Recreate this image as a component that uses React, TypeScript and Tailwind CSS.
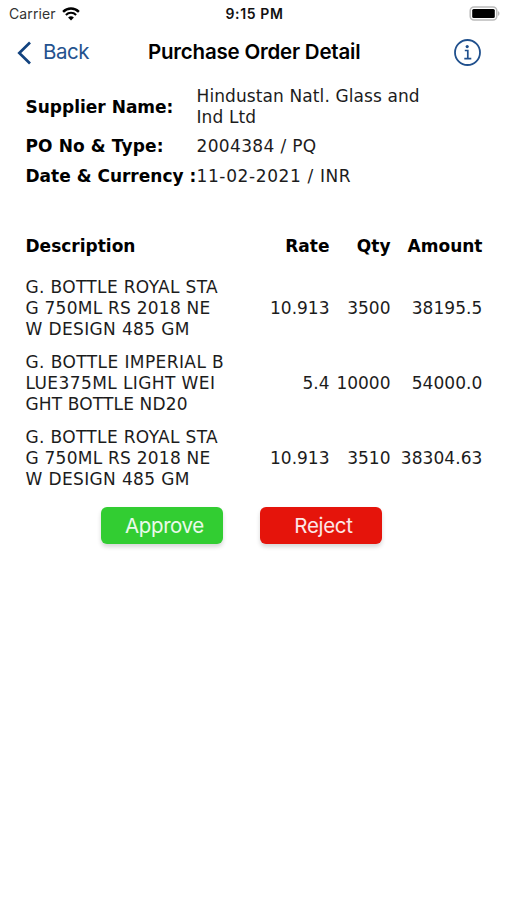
import classNames from "clsx";

interface OrderItem {
  lines: { text: string; tracking: string }[];
  rate: string;
  qty: string;
  amount: string;
}

const royalStag = [
  { text: "G. BOTTLE ROYAL STA", tracking: "tracking-[0.34px]" },
  { text: "G 750ML RS 2018 NE", tracking: "tracking-[0.24px]" },
  { text: "W DESIGN 485 GM", tracking: "tracking-[0.36px]" },
];

const imperialBlue = [
  { text: "G. BOTTLE IMPERIAL B", tracking: "tracking-[0.41px]" },
  { text: "LUE375ML LIGHT WEI", tracking: "tracking-[0.4px]" },
  { text: "GHT BOTTLE ND20", tracking: "tracking-[0.14px]" },
];

const items: OrderItem[] = [
  { lines: royalStag, rate: "10.913", qty: "3500", amount: "38195.5" },
  { lines: imperialBlue, rate: "5.4", qty: "10000", amount: "54000.0" },
  { lines: royalStag, rate: "10.913", qty: "3510", amount: "38304.63" },
];

const StatusBar = () => (
  <div className="grid h-[27px] grid-cols-3 items-center pl-[9px] pr-[7px] text-[14px]">
    <div className="flex items-center gap-[6px]">
      <span className="tracking-[0.1px] text-[#333]">Carrier</span>
      <svg width="18" height="14" viewBox="0 0 18 14" fill="none">
        <path d="M1.1 4.8a11.2 11.2 0 0 1 15.8 0" stroke="#000" strokeWidth="2.4" />
        <path d="M3.9 7.9a7.3 7.3 0 0 1 10.2 0" stroke="#000" strokeWidth="2.1" />
        <path d="M9 13.6 6.1 10.6a4.2 4.2 0 0 1 5.8 0Z" fill="#000" />
      </svg>
    </div>
    <span className="text-center font-semibold tracking-[0.65px] text-[#111]">
      9:15 PM
    </span>
    <svg
      className="justify-self-end"
      width="31"
      height="15"
      viewBox="0 0 31 15"
      fill="none"
    >
      <rect x="1.2" y="1" width="26.6" height="13" rx="3.8" stroke="#bbb" strokeWidth="1.5" />
      <rect x="3.2" y="3" width="22.6" height="9" rx="1.5" fill="#000" />
      <path d="M29.2 5.2c1.6.5 1.6 4.1 0 4.6Z" fill="#aaa" />
    </svg>
  </div>
);

const NavBar = () => (
  <div className="flex h-[51px] items-center pl-[17px] pr-[26px]">
    <button className="flex w-[131px] items-center gap-[11px] text-[20.5px] text-[#24528e]">
      <svg width="15" height="24" viewBox="0 0 15 24" fill="none">
        <path d="M13 1.5 2.3 12 13 22.5" stroke="#12437f" strokeWidth="2.7" />
      </svg>
      <span className="tracking-[-0.45px]">Back</span>
    </button>
    <h1 className="whitespace-nowrap text-[20.5px] font-semibold tracking-[-0.21px] text-black">
      Purchase Order Detail
    </h1>
    <svg className="ml-auto" width="27" height="27" viewBox="0 0 27 27" fill="none" stroke="#20508d">
      <circle cx="13.5" cy="13.5" r="12.5" strokeWidth="1.8" />
      <circle cx="13.2" cy="7.6" r="1.6" fill="#20508d" stroke="none" />
      <path d="M10.8 11.5h3v8.2M10.3 19.7h7" strokeWidth="1.7" />
    </svg>
  </div>
);

const ActionButton: React.FC<{ label: string; className: string }> = ({
  label,
  className,
}) => (
  <button
    className={classNames(
      "flex h-[37px] w-[122px] items-center justify-center rounded-[6px] pl-[5px] pt-[2px] text-[20.5px] text-white/90 shadow-[0_3px_4px_rgba(0,0,0,0.16)]",
      className
    )}
  >
    {label}
  </button>
);

const App = () => {
  return (
    <div className="h-[900px] w-[507px] overflow-hidden bg-white font-['Inter',sans-serif]">
      <StatusBar />
      <NavBar />
      <main className="pl-[25.5px] pr-[24.5px] pt-[8px] font-['DejaVu_Sans',sans-serif] text-[17px] leading-[20.8px] text-[#1c1c1c]">
        <dl className="grid grid-cols-[171px_1fr] items-center gap-y-[8px] whitespace-nowrap">
          <dt className="pt-[2px] font-bold text-black">Supplier Name:</dt>
          <dd className="tracking-[0.1px]">
            Hindustan Natl. Glass and
            <br />
            Ind Ltd
          </dd>
          <dt className="font-bold tracking-[0.12px] text-black">
            PO No &amp; Type:
          </dt>
          <dd className="tracking-[0.35px]">2004384 / PQ</dd>
          <dt className="mt-[2px] font-bold text-black">
            Date &amp; Currency :
          </dt>
          <dd className="mt-[2px] tracking-[0.62px]">11-02-2021 / INR</dd>
        </dl>
        <table className="mt-[48.5px] w-[457px] table-fixed">
          <thead>
            <tr className="font-bold text-black">
              <th className="w-[210px] p-0 text-left">Description</th>
              <th className="w-[94px] p-0 text-right">Rate</th>
              <th className="w-[61px] p-0 text-right">Qty</th>
              <th className="w-[92px] p-0 text-right">Amount</th>
            </tr>
          </thead>
          <tbody className="whitespace-nowrap text-right">
            {items.map(({ lines, rate, qty, amount }, index) => {
              const padding = index === 0 ? "pt-[21px]" : "pt-[12.5px]";
              return (
                <tr key={index}>
                  <td className={classNames("text-left", padding)}>
                    {lines.map(({ text, tracking }) => (
                      <div key={text} className={tracking}>
                        {text}
                      </div>
                    ))}
                  </td>
                  <td className={padding}>{rate}</td>
                  <td className={padding}>{qty}</td>
                  <td className={classNames("tracking-[0.08px]", padding)}>
                    {amount}
                  </td>
                </tr>
              );
            })}
          </tbody>
        </table>
        <div className="mt-[17.5px] flex gap-[37px] pl-[75.5px] font-['Inter',sans-serif]">
          <ActionButton label="Approve" className="bg-[#32cd32] tracking-[-0.4px]" />
          <ActionButton label="Reject" className="bg-[#e5140b] tracking-[-0.3px]" />
        </div>
      </main>
    </div>
  );
};

export default App;
